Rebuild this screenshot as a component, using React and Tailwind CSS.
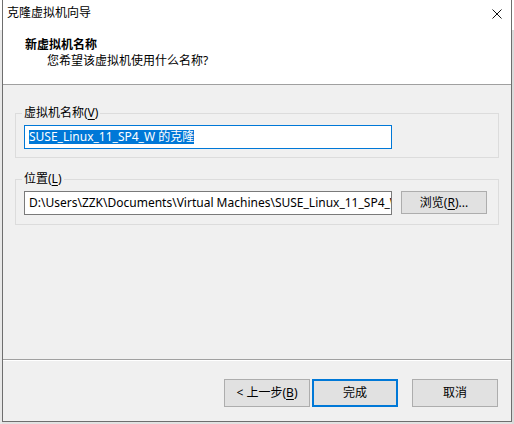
function Key({ children }) {
  return <span className="underline decoration-1 underline-offset-[2px]">{children}</span>;
}

function WinButton({ children, primary }) {
  return (
    <button
      type="button"
      className={
        primary
          ? "w-[86px] h-[28px] bg-[#e1e1e1] border-2 border-[#0078d7] flex items-center justify-center leading-[16px]"
          : "w-[86px] h-[28px] bg-[#e1e1e1] border border-[#adadad] flex items-center justify-center leading-[16px]"
      }
    >
      {children}
    </button>
  );
}

export default function App() {
  return (
    <div className="w-[514px] h-[424px] bg-[#e2e2e2] flex overflow-hidden text-[12px] text-black font-['Noto_Sans','Noto_Sans_CJK_SC',sans-serif]">
      {/* desktop peeking out on the left */}
      <div className="w-[2px] flex flex-col">
        <div className="h-[30px] bg-white" />
        <div className="flex-1 bg-[#e8e8e8]" />
      </div>

      {/* dialog window */}
      <div className="w-[510px] h-[422px] flex flex-col bg-[#f0f0f0] border-x border-b border-[#6e6e6e]">
        {/* title bar + wizard header */}
        <div className="h-[85px] bg-white border-b border-[#a0a0a0] flex flex-col">
          <div className="flex items-start justify-between pl-[4px] pr-[9px] pt-[5px]">
            <span className="leading-[16px]">克隆虚拟机向导</span>
            <svg className="mt-[4px]" width="10" height="10" viewBox="0 0 10 10">
              <path d="M0.5 0.5 L9.5 9.5 M9.5 0.5 L0.5 9.5" stroke="#111" strokeWidth="1" fill="none" />
            </svg>
          </div>
          <div className="pl-[22px] mt-[16px] font-bold leading-[16px]">新虚拟机名称</div>
          <div className="pl-[44px] leading-[16px]">您希望该虚拟机使用什么名称?</div>
        </div>

        {/* body */}
        <div className="flex-1 flex flex-col px-[12px]">
          <div className="mt-[28px] h-[45px] border border-[#dcdcdc] flex flex-col">
            <span className="block w-fit -mt-[9px] ml-[6px] px-[2px] bg-[#f0f0f0] leading-[16px]">
              虚拟机名称(<Key>V</Key>)
            </span>
            <div className="ml-[8px] mt-[4px] w-[368px] h-[24px] bg-white border border-[#0078d7] flex items-center pl-[4px]">
              <span className="inline-block bg-[#0078d7] text-white leading-[14px] whitespace-pre">
                SUSE_Linux_11_SP4_W 的克隆
              </span>
            </div>
          </div>

          <div className="mt-[21px] h-[46px] border border-[#dcdcdc] flex flex-col">
            <span className="block w-fit -mt-[9px] ml-[6px] px-[2px] bg-[#f0f0f0] leading-[16px]">
              位置(<Key>L</Key>)
            </span>
            <div className="ml-[8px] mt-[4px] flex gap-[9px] items-start">
              <div className="w-[368px] h-[24px] bg-white border border-[#7a7a7a] flex items-center pl-[4px] overflow-hidden whitespace-nowrap leading-[16px]">
                D:\Users\ZZK\Documents\Virtual Machines\SUSE_Linux_11_SP4_W 的克隆
              </div>
              <button
                type="button"
                className="w-[86px] h-[23px] bg-[#e1e1e1] border border-[#adadad] flex items-center justify-center leading-[16px]"
              >
                浏览(<Key>R</Key>)...
              </button>
            </div>
          </div>
        </div>

        {/* etched separator */}
        <div className="h-[2px] border-t border-[#a0a0a0] bg-white" />

        {/* wizard buttons */}
        <div className="h-[60px] flex items-start justify-end pt-[18px] pr-[13px]">
          <WinButton>
            &lt; 上一步(<Key>B</Key>)
          </WinButton>
          <div className="w-[2px]" />
          <WinButton primary>完成</WinButton>
          <div className="w-[14px]" />
          <WinButton>取消</WinButton>
        </div>
      </div>

      {/* desktop peeking out on the right */}
      <div className="w-[2px] flex flex-col">
        <div className="h-[30px] bg-white" />
        <div className="flex-1 bg-[#dadada]" />
      </div>
    </div>
  );
}
